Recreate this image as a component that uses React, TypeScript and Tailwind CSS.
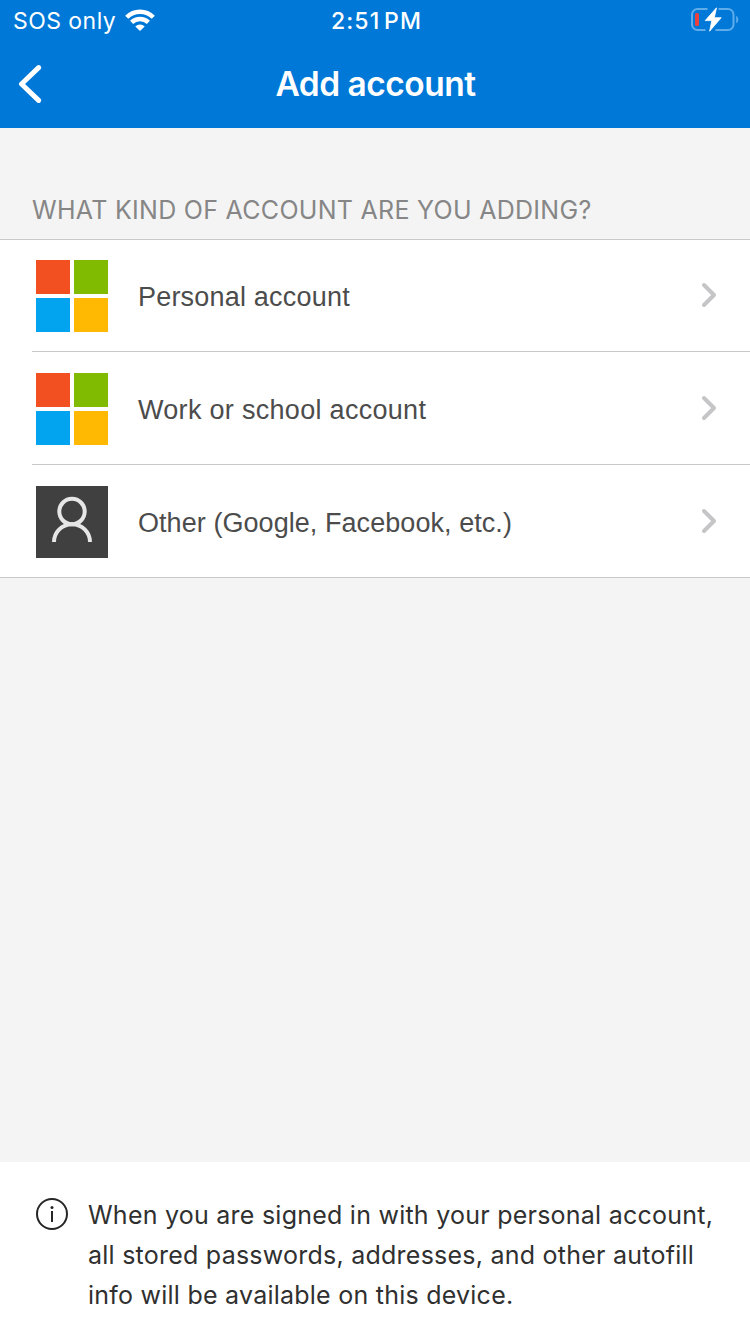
import React from 'react';

const MicrosoftLogo = () => (
  <div className="grid grid-cols-2 gap-1 w-[72px] h-[72px]">
    <div className="bg-[#f35022]"></div>
    <div className="bg-[#80bb01]"></div>
    <div className="bg-[#02a4f0]"></div>
    <div className="bg-[#ffb902]"></div>
  </div>
);

const PersonTile = () => (
  <div className="w-[72px] h-[72px] bg-[#404040]">
    <svg viewBox="0 0 72 72" className="w-full h-full" fill="none" stroke="#e6e6e6" strokeWidth="4">
      <circle cx="36" cy="25.5" r="12.7" />
      <path d="M18 56C18 46 26 38.2 36 38.2S54 46 54 56" />
    </svg>
  </div>
);

const WifiIcon = () => (
  <svg viewBox="0 0 30 22" className="-mt-0.5 w-[30px] h-[22px]" fill="none" stroke="#fff" strokeWidth="4.4">
    <path d="M1.7 8.2A18.8 18.8 0 0 1 28.3 8.2" />
    <path d="M6.6 13.4A11.9 11.9 0 0 1 23.4 13.4" />
    <path d="M15 22L10.3 17.5A6.5 6.5 0 0 1 19.7 17.5Z" fill="#fff" stroke="none" />
  </svg>
);

const BatteryIcon = () => (
  <svg viewBox="0 0 50 26" className="-mt-0.5 w-[50px] h-[26px]" fill="none">
    <path d="M17.5 2H7.5A5.5 5.5 0 0 0 2 7.5V17.5A5.5 5.5 0 0 0 7.5 23H15.5M28.5 2H38A5.5 5.5 0 0 1 43.5 7.5V17.5A5.5 5.5 0 0 1 38 23H25.5" stroke="#5facea" strokeWidth="2" />
    <path d="M46.2 8.7C49 10 49 15 46.2 16.3Z" fill="#5facea" />
    <rect x="5" y="6" width="4" height="13" rx="1.5" fill="#e8403f" />
    <path d="M26.5 0.8L15.2 13.6H21.8L19.6 24.2L31.2 10.7H24.3Z" fill="#fff" stroke="#fff" strokeWidth="0.8" strokeLinejoin="round" />
  </svg>
);

const InfoIcon = () => (
  <svg viewBox="0 0 32 32" className="w-8 h-8 shrink-0" fill="none" stroke="#262626" strokeWidth="2">
    <circle cx="16" cy="16" r="15" />
    <path d="M16 13V24" />
    <circle cx="16" cy="9.6" r="1.5" fill="#262626" stroke="none" />
  </svg>
);

const accounts = [
  { name: "Personal account", icon: <MicrosoftLogo />, tracking: "tracking-[0.2px]" },
  { name: "Work or school account", icon: <MicrosoftLogo />, tracking: "tracking-[0.3px]" },
  { name: "Other (Google, Facebook, etc.)", icon: <PersonTile />, tracking: "tracking-[0.06px]" }
];

const App = () => {
  return (
    <div className="w-[750px] h-[1334px] flex flex-col bg-[#f4f4f4] font-['Inter',sans-serif] overflow-hidden">
      <header className="h-32 bg-[#0078d7] text-white">
        {/* Status bar */}
        <div className="h-10 pl-[13px] pr-[10px] grid grid-cols-3 items-center">
          <div className="flex items-center gap-[9px]">
            <span className="text-[23px] leading-[42px] tracking-[0.45px]">SOS only</span>
            <WifiIcon />
          </div>
          <span className="text-[23px] leading-[42px] font-medium text-center tracking-[1.1px] [word-spacing:-3.5px]">2:51 PM</span>
          <div className="flex justify-end">
            <BatteryIcon />
          </div>
        </div>

        {/* Navigation bar */}
        <div className="h-[88px] pl-[18px] grid grid-cols-[80px_1fr_97px] items-center">
          <button className="w-6">
            <svg viewBox="0 0 24 40" className="w-6 h-10" fill="none" stroke="#fff" strokeWidth="5" strokeLinecap="round" strokeLinejoin="round">
              <path d="M20.6 3.6L3.5 20L20.6 36.4" />
            </svg>
          </button>
          <h1 className="text-[33.5px] font-semibold text-center tracking-[-0.5px]">Add account</h1>
        </div>
      </header>

      <h2 className="h-28 pl-8 pb-3 flex items-end border-b border-[#c8c8cb] text-[25px] leading-[34px] text-[#868686] tracking-[0.29px]">
        WHAT KIND OF ACCOUNT ARE YOU ADDING?
      </h2>

      <ul className="flex flex-col bg-white border-b border-[#c8c8cb] font-['Liberation_Sans',sans-serif]">
        {accounts.map((account, index) => (
          <li key={index} className="first:-mt-px">
            {index > 0 && <div className="ml-8 h-px bg-[#c8c8cb]"></div>}
            <div className="h-28 pt-0.5 pl-9 pr-[33px] flex items-center">
              {account.icon}
              <span className={`ml-[30px] pt-0.5 text-[27px] text-[#4c4c4c] ${account.tracking}`}>{account.name}</span>
              <svg viewBox="0 0 16 26" className="ml-auto -mt-0.5 w-4 h-[26px]" fill="none" stroke="#c5c5c7" strokeWidth="4" strokeLinecap="round" strokeLinejoin="round">
                <path d="M3 3L13 13L3 23" />
              </svg>
            </div>
          </li>
        ))}
      </ul>

      <footer className="mt-auto h-[172px] pt-9 pl-9 flex gap-5 bg-white">
        <InfoIcon />
        <p className="-mt-[3px] text-[25px] leading-10 text-[#303030] tracking-[0.24px]">
          When you are signed in with your personal account,<br />
          all stored passwords, addresses, and other autofill<br />
          info will be available on this device.
        </p>
      </footer>
    </div>
  );
};

export default App;
